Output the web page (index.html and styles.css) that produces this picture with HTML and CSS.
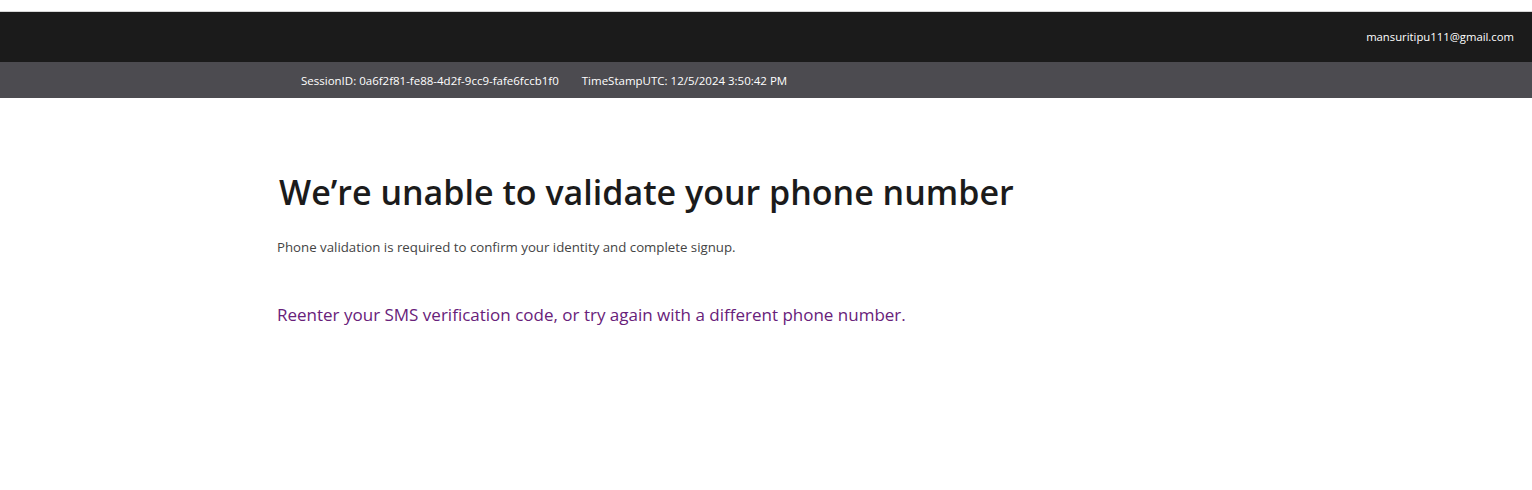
FILE: index.html
```html
<!DOCTYPE html>
<html lang="en">
<head>
<meta charset="utf-8">
<title>Phone validation</title>
<link rel="stylesheet" href="styles.css">
</head>
<body>
<div class="topgap"></div>
<header class="header">
  <span class="user">mansuritipu111@gmail.com</span>
</header>
<div class="session">
  <span class="sid">SessionID: 0a6f2f81-fe88-4d2f-9cc9-fafe6fccb1f0</span>
  <span class="ts">TimeStampUTC: 12/5/2024 3:50:42 PM</span>
</div>
<main class="content">
  <h1 class="title">We’re unable to validate your phone number</h1>
  <p class="desc">Phone validation is required to confirm your identity and complete signup.</p>
  <p class="action">Reenter your SMS verification code, or try again with a different phone number.</p>
</main>
</body>
</html>
```
FILE: styles.css
```css
* { box-sizing: border-box; }
html, body { margin: 0; padding: 0; background: #fff; }
body { font-family: "Open Sans", "Noto Sans", sans-serif; color: #1b1b1b; }
.topgap { height: 12px; background: #fff; border-bottom: 1px solid #d6d6d6; }
.header {
  height: 50px;
  background: #1b1b1b;
  display: flex;
  justify-content: flex-end;
  align-items: center;
  padding: 0 18px 2px 0;
}
.user { color: #fff; font-size: 11.3px; }
.session {
  height: 36px;
  background: #4c4b50;
  display: flex;
  align-items: center;
  padding-left: 301px;
  gap: 23px;
  color: #fff;
  font-size: 11.5px;
}
.content { padding: 70px 0 0 277px; }
.title { margin: 0 0 0 2px; font-size: 34px; font-weight: 600; line-height: 48px; color: #1b1b1b; }
.desc { margin: 22px 0 0; font-size: 13.25px; color: #444; }
.action { margin: 47px 0 0; font-size: 17px; color: #68217a; }
```
